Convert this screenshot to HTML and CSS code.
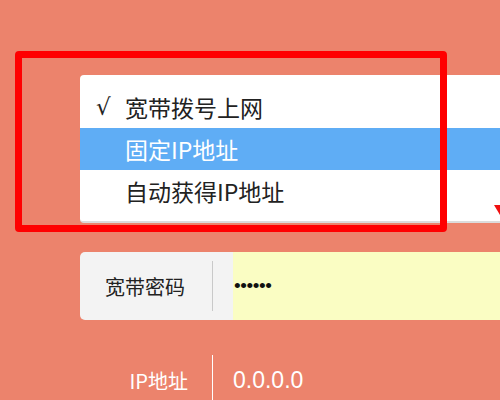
FILE: index.html
```html
<!DOCTYPE html>
<html>
<head>
<meta charset="utf-8">
<link rel="stylesheet" href="styles.css">
</head>
<body>
<div class="page">
  <div class="menu">
    <div class="opt"><span class="check">√</span><span>宽带拨号上网</span></div>
    <div class="opt sel"><span class="check"></span><span>固定IP地址</span></div>
    <div class="opt"><span class="check"></span><span>自动获得IP地址</span></div>
    <span class="arrow"></span>
  </div>
  <div class="field">
    <div class="label"><span class="ltext">宽带密码</span><span class="div"></span></div>
    <div class="input">••••••</div>
  </div>
  <div class="info">
    <div class="ilabel"><span class="ltext">IP地址</span><span class="div"></span></div>
    <div class="ival">0.0.0.0</div>
  </div>
  <div class="highlight"></div>
</div>
</body>
</html>
```
FILE: styles.css
```css
html, body {
  margin: 0;
  padding: 0;
  width: 500px;
  height: 400px;
  overflow: hidden;
  background: #ec836c;
  font-family: "Noto Sans CJK SC", "Noto Sans", sans-serif;
}
.page {
  position: relative;
  padding-top: 75px;
  padding-left: 80px;
}
.menu {
  position: relative;
  background: #fff;
  height: 148px;
  padding: 11px 0 0 0;
  box-sizing: border-box;
  border-bottom: 2px solid #dcdcdc;
  border-radius: 4px 0 0 4px;
}
.opt {
  display: flex;
  align-items: center;
  height: 42px;
  padding-left: 16px;
  font-size: 23px;
  color: #222;
}
.opt.sel {
  background: #5fadf5;
  color: #fff;
}
.check {
  width: 29px;
  font-family: "DejaVu Sans", sans-serif;
  font-size: 23px;
}
.arrow {
  position: absolute;
  right: -6px;
  top: 130px;
  width: 0;
  height: 0;
  border-left: 6px solid transparent;
  border-right: 6px solid transparent;
  border-top: 10px solid #f01010;
}
.field {
  display: flex;
  margin-top: 29px;
  height: 68px;
}
.label {
  display: flex;
  align-items: center;
  width: 153px;
  background: #f3f3f3;
  border-radius: 5px 0 0 5px;
  font-size: 20px;
  color: #222;
}
.ltext {
  width: 105px;
  text-align: right;
  padding-right: 27px;
}
.div {
  width: 1px;
  height: 50px;
  background: #c9c9c9;
}
.input {
  flex: 1;
  display: flex;
  align-items: center;
  background: #fafdc3;
  padding-left: 1px;
  font-family: "Liberation Sans", sans-serif;
  font-size: 19px;
  letter-spacing: -0.4px;
  color: #111;
}
.info {
  display: flex;
  margin-top: 26px;
  height: 68px;
  align-items: center;
}
.ilabel {
  display: flex;
  align-items: center;
  width: 153px;
  font-size: 20px;
  color: #fff;
}
.ilabel .ltext {
  padding-right: 24px;
  width: 108px;
}
.ilabel .div {
  background: #fff;
}
.ival {
  font-family: "Liberation Sans", sans-serif;
  font-size: 23px;
  color: #fff;
}
.highlight {
  position: absolute;
  left: 15px;
  top: 51px;
  width: 432px;
  height: 181px;
  box-sizing: border-box;
  border: 7px solid #ff0000;
  border-radius: 4px;
}
```
